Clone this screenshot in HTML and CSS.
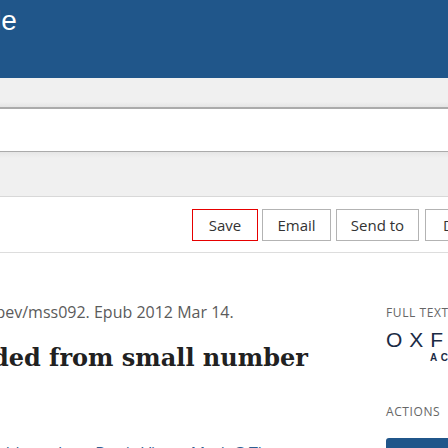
FILE: index.html
```html
<!DOCTYPE html>
<html>
<head>
<meta charset="utf-8">
<link rel="stylesheet" href="styles.css">
</head>
<body>
<div class="page">
  <header class="top"><span class="brand">PubMede</span></header>
  <div class="bar1"></div>
  <div class="gap"></div>
  <div class="bar2"></div>
  <div class="toolbar">
    <button class="btn focus">Save</button>
    <button class="btn">Email</button>
    <button class="btn wide">Send to</button>
    <button class="btn more">Display options</button>
  </div>
  <div class="rule"></div>
  <div class="content">
    <div class="main">
      <p class="cite">molbev/mss092. Epub 2012 Mar 14.</p>
      <h1 class="title">descended from small number</h1>
      <p class="authors">Marjan Mashkour, Jean-Denis Vigne, Mark G Thomas</p>
    </div>
    <aside class="side">
      <div class="label">FULL TEXT</div>
      <div class="logo">
        <div class="logo-main">OXFORD</div>
        <div class="logo-sub">ACADEMIC</div>
      </div>
      <div class="label actions">ACTIONS</div>
      <div class="cta"></div>
    </aside>
  </div>
</div>
</body>
</html>
```
FILE: styles.css
```css
html, body {
  margin: 0;
  padding: 0;
  background: #ffffff;
  overflow: hidden;
}
.page {
  width: 448px;
  height: 448px;
  overflow: hidden;
  font-family: "Open Sans", sans-serif;
}
.top {
  height: 78px;
  background: #20568a;
  overflow: hidden;
  display: flex;
  align-items: flex-start;
}
.brand {
  color: #ffffff;
  font-family: "Liberation Sans", sans-serif;
  font-size: 28px;
  line-height: 28px;
  margin-top: 7px;
  margin-left: -103px;
}
.bar1 {
  height: 29px;
  background: linear-gradient(#f0f0f0 0, #f0f0f0 24px, #e4e4e4 29px);
  border-bottom: 2px solid #ababab;
}
.gap {
  height: 42px;
}
.bar2 {
  height: 44px;
  background: linear-gradient(#e6e6e6 0, #f0f0f0 6px, #f0f0f0 100%);
  border-top: 1px solid #ababab;
  border-bottom: 1px solid #d8d8d8;
}
.toolbar {
  display: flex;
  padding: 12px 0 0 192px;
  white-space: nowrap;
}
.btn {
  flex: none;
  height: 32px;
  margin: 0 4px 0 0;
  padding: 0;
  background: #ffffff;
  border: 1px solid #b3b3b3;
  font-family: "Open Sans", sans-serif;
  font-size: 15px;
  color: #333333;
  text-align: center;
  line-height: 30px;
  width: 69px;
  box-sizing: border-box;
}
.btn.focus {
  width: 66px;
  border: 1px solid #e60000;
}
.btn.wide {
  width: 83px;
  margin-left: 1px;
  margin-right: 6px;
}
.btn.more {
  width: 140px;
  text-align: left;
  padding-left: 17px;
}
.rule {
  margin-top: 11px;
  border-top: 1px solid #dddddd;
}
.content {
  display: flex;
  width: 600px;
}
.main {
  width: 386px;
  flex: none;
  overflow: hidden;
}
.cite {
  margin: 47px 0 0 -33px;
  font-size: 16px;
  line-height: 24px;
  color: #5b5b5b;
  white-space: nowrap;
}
.title {
  margin: 17px 0 0 -101px;
  font-family: "DejaVu Serif", serif;
  font-weight: bold;
  font-size: 24px;
  line-height: 34px;
  color: #212121;
  white-space: nowrap;
}
.authors {
  margin: 66px 0 0 -82px;
  font-size: 16px;
  line-height: 24px;
  color: #2f5f92;
  white-space: nowrap;
}
.side {
  flex: none;
  width: 200px;
  padding-top: 52px;
}
.label {
  font-size: 12px;
  letter-spacing: 0.6px;
  color: #666666;
  line-height: 16px;
}
.logo {
  margin-top: 8px;
  color: #1b2b45;
}
.logo-main {
  font-family: "Liberation Sans", sans-serif;
  font-size: 21px;
  letter-spacing: 7px;
  line-height: 22px;
}
.logo-sub {
  font-family: "Liberation Sans", sans-serif;
  font-weight: bold;
  font-size: 10px;
  letter-spacing: 3.5px;
  line-height: 12px;
  margin-left: 44px;
  margin-top: 1px;
}
.label.actions {
  margin-top: 40px;
}
.cta {
  margin-top: 18px;
  height: 40px;
  width: 180px;
  background: #20568a;
  border-radius: 3px;
}
```
